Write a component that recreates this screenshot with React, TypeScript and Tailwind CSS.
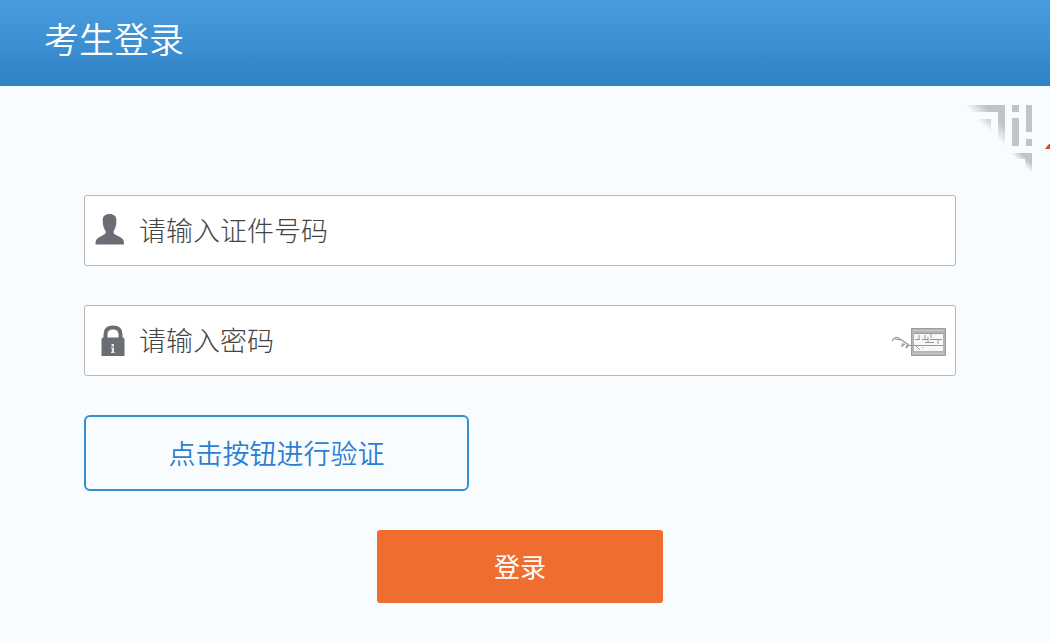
import type { ReactNode } from "react";

function UserIcon() {
  return (
    <svg width="30" height="32" viewBox="0 0 30 32" fill="#6b6d75" aria-hidden="true">
      <path d="M14.5 -1C19 -1 21.6 1 21.4 6C21.3 10.4 20.4 13.4 18.6 16V18C20 20.6 27.4 22 28.4 25.2C29 26.400 29 27.6 29 29.500H0.5C0.5 27.6 0.5 26.400 1.2 25.2C2.4 22 9.4 20.6 10.6 18V16C8.8 13.4 7.8 10.4 7.7 6C7.5 1 10 -1 14.5 -1Z" className="overflow-visible" />
    </svg>
  );
}

function LockIcon() {
  return (
    <svg width="24" height="32" viewBox="0 0 24 32" aria-hidden="true">
      <path d="M4.5 14V9.2C4.5 4.8 7.4 2.5 12 2.5C16.6 2.5 19.5 4.8 19.5 9.2V14" fill="none" stroke="#6b6d75" strokeWidth="4" />
      <path d="M1.5 12.5H22.5L23.5 14V31H0.5V14Z" fill="#6b6d75" />
      <path d="M10.5 19H13V21.4H10.5ZM10 22.5H13V27H13.6V28H10V27H10.8V23.4H10Z" fill="#e8e8ea" />
    </svg>
  );
}

function KeyboardIcon() {
  return (
    <svg width="56" height="30" viewBox="0 0 56 30" fill="none" aria-hidden="true">
      <path d="M1 14C3 10 6 9.5 9 12L18 18M4 12L10 13M12 16L11 19L14 17M16 18L15 21L18 18" stroke="#999" strokeWidth="1.2" />
      <rect x="20.5" y="1.5" width="34" height="27" fill="#b4b4b4" stroke="#9c9c9c" />
      <rect x="23" y="6" width="29" height="18" fill="#f7f7f7" />
      <path d="M22 3.5H53M22 26.5H53" stroke="#c8c8c8" />
      <path d="M23 6.5H52M18 18.5H52M24 12.5H29M31 12.5H37M39 12.5H51M34 15.5H43M28 8V12M34 8V12M40 7V11M37 10V16M47 13V17M25 19L29 23M32 20V21" stroke="#999" />
    </svg>
  );
}

function CornerCode() {
  return (
    <svg width="86" height="70" viewBox="0 0 86 70" className="absolute top-[18px] right-0" aria-hidden="true">
      <defs>
        <linearGradient id="fade" x1="0" y1="1" x2="1" y2="0">
          <stop offset="0.5" stopColor="#c2c3c4" stopOpacity="0" />
          <stop offset="0.74" stopColor="#c2c3c4" />
        </linearGradient>
        <linearGradient id="fade-soft" x1="0" y1="1" x2="1" y2="0">
          <stop offset="0.48" stopColor="#c2c3c4" stopOpacity="0" />
          <stop offset="1" stopColor="#c2c3c4" stopOpacity="0.85" />
        </linearGradient>
      </defs>
      <path d="M0 1H41V43H34V8H0Z" fill="url(#fade)" />
      <path d="M13 15H27V28H13Z" fill="url(#fade-soft)" />
      <path d="M46 49H68V70H61V55H46Z" fill="url(#fade)" />
      <path d="M48 1H55V8H48ZM48 14H55V42H48ZM62 1H68V28H62ZM62 35H68V42H62Z" fill="#c2c3c4" />
      <path d="M81 45L84 41L86 39.5V45Z" fill="#d84822" />
    </svg>
  );
}

function Field({ id, label, type, icon, trailing }: {
  id: string;
  label: string;
  type: string;
  icon: ReactNode;
  trailing?: ReactNode;
}) {
  return (
    <div className="flex h-[71px] items-center rounded-[3px] border border-[#b5b7b8] bg-white pr-2 pl-[10px]">
      <label htmlFor={id} aria-label={label} className="flex w-[30px] shrink-0 justify-center [&_svg]:overflow-visible">
        {icon}
      </label>
      <input
        id={id}
        type={type}
        placeholder={label}
        className="h-full min-w-0 flex-1 bg-transparent pb-[2px] pl-[14px] text-[27px] font-light text-[#444] outline-none placeholder:text-[#444]"
      />
      {trailing}
    </div>
  );
}

export default function App() {
  return (
    <div className="min-h-screen bg-[#f8fcff] font-['Noto_Sans_CJK_SC',sans-serif]">
      <header className="flex h-[86px] items-center bg-linear-to-b from-[#4a9ce0] to-[#2e83c4] px-11 pb-[10px]">
        <h1 className="text-[35px] leading-[48px] font-[350] text-white">考生登录</h1>
      </header>
      <main className="relative pt-[109px] pr-[94px] pb-10 pl-[84px]">
        <CornerCode />
        <form className="flex flex-col gap-[39px]" onSubmit={(e) => e.preventDefault()}>
          <Field id="account" label="请输入证件号码" type="text" icon={<UserIcon />} />
          <Field
            id="password"
            label="请输入密码"
            type="password"
            icon={<div className="pl-[5px]"><LockIcon /></div>}
            trailing={
              <button type="button" aria-label="软键盘" className="shrink-0 pt-[2px]">
                <KeyboardIcon />
              </button>
            }
          />
          <button type="button" className="h-[76px] w-[385px] rounded-md border-2 border-[#3490cc] text-[27px] font-[350] text-[#2b7fd0]">
            点击按钮进行验证
          </button>
          <button type="submit" className="h-[73px] w-[286px] self-center rounded-[3px] bg-[#f06d30] pb-[2px] text-[26px] text-white">
            登录
          </button>
        </form>
      </main>
    </div>
  );
}
